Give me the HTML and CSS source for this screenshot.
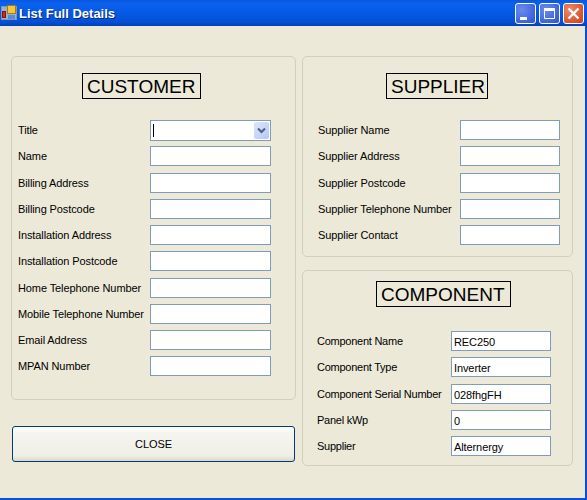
FILE: index.html
```html
<!DOCTYPE html>
<html lang="en">
<head>
<meta charset="utf-8">
<title>List Full Details</title>
<link rel="stylesheet" href="styles.css">
</head>
<body>
<div class="window">
  <header class="titlebar">
    <svg class="app-icon" width="16" height="16" viewBox="0 0 16 16">
      <rect x="0.5" y="1.5" width="15" height="13" fill="#9ab2d2" stroke="#8a94a8"/>
      <rect x="6.500" y="0.500" width="8" height="8" fill="#f4c838" stroke="#a87818"/>
      <rect x="1.500" y="6.500" width="3" height="6" fill="#d02818" stroke="#801810"/>
      <rect x="7" y="10" width="7" height="4" fill="#5a8ad8"/>
    </svg>
    <span class="title-text">List Full Details</span>
    <div class="controls">
      <div class="ctl ctl-blue">
        <svg width="21" height="21" viewBox="0 0 21 21"><rect x="5" y="14" width="7" height="3" fill="#fff"/></svg>
      </div>
      <div class="ctl ctl-blue">
        <svg width="21" height="21" viewBox="0 0 21 21"><path d="M5.500 5.500h10v10h-10z" fill="none" stroke="#fff"/><rect x="5" y="5" width="11" height="3" fill="#fff"/></svg>
      </div>
      <div class="ctl ctl-red">
        <svg width="21" height="21" viewBox="0 0 21 21"><path d="M5.500 5.500l10 10M15.500 5.500l-10 10" stroke="#fff" stroke-width="2.400" fill="none"/></svg>
      </div>
    </div>
  </header>
  <main class="client">
    <div class="left-col">
      <section class="panel customer">
        <h2 class="heading">CUSTOMER</h2>
        <div class="rows">
          <div class="row first"><label>Title</label><div class="combo"><span class="caret"></span><span class="drop"><svg width="9" height="7" viewBox="0 0 9 7"><path d="M1 1.500l3.500 3.500 3.500-3.500" fill="none" stroke="#4d6185" stroke-width="2"/></svg></span></div></div>
          <div class="row"><label>Name</label><div class="field"></div></div>
          <div class="row"><label>Billing Address</label><div class="field"></div></div>
          <div class="row"><label>Billing Postcode</label><div class="field"></div></div>
          <div class="row"><label>Installation Address</label><div class="field"></div></div>
          <div class="row"><label>Installation Postcode</label><div class="field"></div></div>
          <div class="row"><label>Home Telephone Number</label><div class="field"></div></div>
          <div class="row"><label>Mobile Telephone Number</label><div class="field"></div></div>
          <div class="row"><label>Email Address</label><div class="field"></div></div>
          <div class="row"><label>MPAN Number</label><div class="field"></div></div>
        </div>
      </section>
      <button class="close" type="button">CLOSE</button>
    </div>
    <div class="right-col">
      <section class="panel supplier">
        <h2 class="heading">SUPPLIER</h2>
        <div class="rows">
          <div class="row"><label>Supplier Name</label><div class="field short"></div></div>
          <div class="row"><label>Supplier Address</label><div class="field short"></div></div>
          <div class="row"><label>Supplier Postcode</label><div class="field short"></div></div>
          <div class="row"><label>Supplier Telephone Number</label><div class="field short"></div></div>
          <div class="row"><label>Supplier Contact</label><div class="field short"></div></div>
        </div>
      </section>
      <section class="panel component">
        <h2 class="heading">COMPONENT</h2>
        <div class="rows">
          <div class="row"><label>Component Name</label><div class="field short">REC250</div></div>
          <div class="row"><label>Component Type</label><div class="field short">Inverter</div></div>
          <div class="row"><label>Component Serial Number</label><div class="field short">028fhgFH</div></div>
          <div class="row"><label>Panel kWp</label><div class="field short">0</div></div>
          <div class="row"><label>Supplier</label><div class="field short">Alternergy</div></div>
        </div>
      </section>
    </div>
  </main>
</div>
</body>
</html>
```

FILE: styles.css
```css
* { box-sizing: border-box; }
html, body { margin: 0; padding: 0; }
body { width: 587px; height: 500px; overflow: hidden; background: #0a4fdc; font-family: "Liberation Sans", Arial, sans-serif; font-size: 11px; letter-spacing: -0.1px; color: #000; }

.window { width: 585px; height: 498px; display: flex; flex-direction: column; background: #ece9d8; }

.titlebar {
  height: 26px; flex: none; display: flex; align-items: center; padding: 0 1px 0 1px;
  margin-right: -2px;
  background: linear-gradient(#0a57d8 0, #0a62ef 12%, #0559e4 50%, #0450d4 85%, #0240b8 100%);
}
.app-icon { flex: none; }
.title-text { margin-left: 2px; color: #fff; font: bold 13px "Liberation Sans", sans-serif; letter-spacing: 0; text-shadow: 1px 1px 0 #0a2a80; }
.controls { margin-left: auto; margin-right: 2px; display: flex; gap: 3px; }
.ctl { width: 21px; height: 21px; border: 1px solid #fff; border-radius: 3px; position: relative; }
.ctl svg { position: absolute; left: -1px; top: -1px; }
.ctl-blue { background: radial-gradient(circle at 30% 30%, #6a8cec, #2a52d8); }
.ctl-red { background: radial-gradient(circle at 30% 30%, #ec8a6a, #d03c12); }

.client { flex: 1; display: flex; padding: 30px 0 0 11px; gap: 6px; }
.left-col { width: 285px; display: flex; flex-direction: column; }
.right-col { width: 271px; display: flex; flex-direction: column; gap: 13px; }

.panel { border: 1px solid #d0d0bf; border-radius: 5px; }
.customer { height: 344px; padding: 16px 0 0 6px; }
.supplier { height: 201px; padding: 16px 0 0 15px; }
.component { height: 196px; padding: 10px 0 0 14px; }

.heading { display: table; margin: 0; border: 1px solid #000; font-size: 19px; letter-spacing: 0; line-height: 23px; font-weight: normal; }
.customer .heading { margin-left: 64px; padding: 1px 5px 0 4px; }
.supplier .heading { margin-left: 68px; padding: 1px 2px 0 4px; }
.component .heading { margin-left: 59px; padding: 1px 5px 0 4px; }

.rows { display: grid; grid-auto-rows: 26.250px; }
.customer .rows { margin-top: 21px; }
.supplier .rows { margin-top: 21px; }
.component .rows { margin-top: 24px; }

.row { display: flex; align-items: flex-start; }
.row.first { margin-bottom: 1px; }
.row label { width: 132px; flex: none; padding-top: 4px; white-space: nowrap; }
.supplier .row label { width: 142px; }
.component .row label { width: 134px; padding-top: 4px; letter-spacing: -0.25px; }

.field, .combo { width: 121px; height: 20px; background: #fff; border: 1px solid #7f9db9; }
.field.short { width: 100px; padding: 3px 0 0 2px; line-height: 15px; }

.combo { height: 21px; display: flex; align-items: center; justify-content: space-between; padding: 1px; }
.caret { width: 1px; height: 13px; margin-left: 1px; background: #000; }
.drop { width: 15px; height: 17px; display: flex; align-items: center; justify-content: center; border-radius: 2px; background: linear-gradient(135deg, #dbe6fd, #b4c8f6); }

.close {
  width: 283px; height: 36px; margin: 26px 0 0 1px; padding: 0;
  border: 1px solid #003c74; border-radius: 3px;
  background: linear-gradient(#fff 0, #f5f4ef 20%, #f0efe6 85%, #dcd8c8 100%);
  font: 11px "Liberation Sans", Arial, sans-serif; letter-spacing: -0.1px; color: #000;
}
```
